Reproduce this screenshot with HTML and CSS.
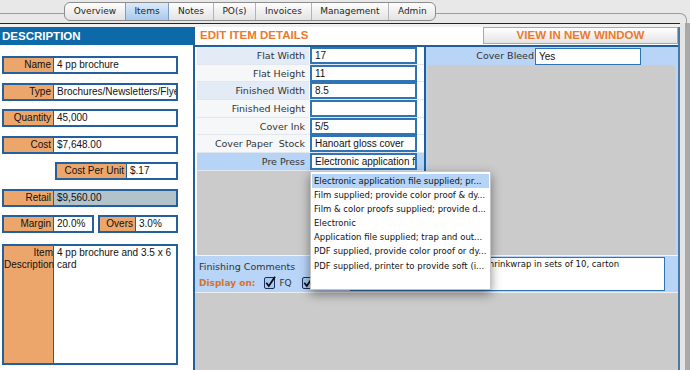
FILE: index.html
```html
<!DOCTYPE html>
<html lang="en">
<head>
  <meta charset="UTF-8">
  <meta name="viewport" content="width=device-width, initial-scale=1.0">
  <title>Items</title>
  <link rel="stylesheet" href="styles.css">
</head>
<body>
  <div class="tab-strip">
    <div class="tabs">
      <div class="tab">Overview</div>
      <div class="tab active">Items</div>
      <div class="tab">Notes</div>
      <div class="tab">PO(s)</div>
      <div class="tab">Invoices</div>
      <div class="tab">Management</div>
      <div class="tab">Admin</div>
    </div>
  </div>

  <div class="content">
    <div class="desc-col">
      <div class="desc-header">DESCRIPTION</div>
      <div class="desc-fields">
        <div class="field"><div class="lbl">Name</div><div class="val">4 pp brochure</div></div>
        <div class="field"><div class="lbl">Type</div><div class="val">Brochures/Newsletters/Flyers</div></div>
        <div class="field"><div class="lbl">Quantity</div><div class="val">45,000</div></div>
        <div class="field"><div class="lbl">Cost</div><div class="val">$7,648.00</div></div>
        <div class="field cpu"><div class="lbl">Cost Per Unit</div><div class="val">$.17</div></div>
        <div class="field"><div class="lbl">Retail</div><div class="val readonly">$9,560.00</div></div>
        <div class="field-pair">
          <div class="field margin"><div class="lbl">Margin</div><div class="val">20.0%</div></div>
          <div class="field overs"><div class="lbl">Overs</div><div class="val">3.0%</div></div>
        </div>
        <div class="field desc"><div class="lbl">Item<br>Description</div><div class="val">4 pp brochure and 3.5 x 6 card</div></div>
      </div>
    </div>

    <div class="edit-col">
      <div class="edit-header">
        <div class="edit-title">EDIT ITEM DETAILS</div>
        <div class="view-btn">VIEW IN NEW WINDOW</div>
      </div>

      <div class="panes">
        <div class="mid-pane">
          <div class="drow alt"><div class="dlbl">Flat Width</div><div class="dinput">17</div></div>
          <div class="drow"><div class="dlbl">Flat Height</div><div class="dinput">11</div></div>
          <div class="drow alt"><div class="dlbl">Finished Width</div><div class="dinput">8.5</div></div>
          <div class="drow"><div class="dlbl">Finished Height</div><div class="dinput"></div></div>
          <div class="drow"><div class="dlbl">Cover Ink</div><div class="dinput">5/5</div></div>
          <div class="drow"><div class="dlbl">Cover Paper&nbsp; Stock</div><div class="dinput">Hanoart gloss cover</div></div>
          <div class="drow selected"><div class="dlbl">Pre Press</div><div class="dinput">Electronic application file supplied</div></div>
          <div class="pane-fill"></div>
        </div>
        <div class="side-pane">
          <div class="srow"><div class="dlbl">Cover Bleed</div><div class="dinput">Yes</div></div>
          <div class="pane-fill"></div>
        </div>
      </div>

      <div class="finishing">
        <div class="fin-label">
          <div class="fin-title">Finishing Comments</div>
          <div class="display-on">
            <span class="disp">Display on:</span>
            <span class="check">
              <svg width="13" height="13" viewBox="0 0 13 13"><rect x="0.5" y="1.5" width="10" height="11" rx="1.5" fill="#a9cbf0" stroke="#1c2d5a"/><path d="M2.3 6.8 L4.8 10 L11 0.8" fill="none" stroke="#0a0a1a" stroke-width="1.8"/></svg>
            </span>FQ
            <span class="check second">
              <svg width="13" height="13" viewBox="0 0 13 13"><rect x="0.5" y="1.5" width="10" height="11" rx="1.5" fill="#a9cbf0" stroke="#1c2d5a"/><path d="M2.3 6.8 L4.8 10 L11 0.8" fill="none" stroke="#0a0a1a" stroke-width="1.8"/></svg>
            </span>PO
          </div>
        </div>
        <div class="fin-text">Fold in half, trim to size, then shrinkwrap in sets of 10, carton</div>
      </div>
      <div class="bottom-fill"></div>
    </div>
  </div>

  <div class="dropdown">
    <div class="opt active">Electronic application file supplied; pr...</div>
    <div class="opt">Film supplied; provide color proof &amp; dy...</div>
    <div class="opt">Film &amp; color proofs supplied; provide d...</div>
    <div class="opt">Electronic</div>
    <div class="opt">Application file supplied; trap and out...</div>
    <div class="opt">PDF supplied, provide color proof or dy...</div>
    <div class="opt">PDF supplied, printer to provide soft (i...</div>
  </div>
</body>
</html>
```

FILE: styles.css
```css
* {
  margin: 0;
  padding: 0;
  box-sizing: border-box;
}
html, body {
  width: 690px;
  height: 370px;
  overflow: hidden;
}
body {
  position: relative;
  background: linear-gradient(to right, #e4e4e4 0, #e4e4e4 685px, #a9a9a9 685px);
  font-family: "DejaVu Sans", sans-serif;
  font-size: 9px;
  color: #222;
}

/* Tab bar */
.tab-strip {
  position: relative;
  height: 23px;
  padding: 2px 0 0 64px;
  background: #e8e8e8;
}
.tab-strip::before {
  content: '';
  position: absolute;
  left: -10px;
  right: 3px;
  top: 13px;
  height: 14px;
  border-top: 1px solid #9d9d9d;
  border-right: 1px solid #9d9d9d;
  border-top-right-radius: 7px;
}
.tabs {
  position: relative;
  display: inline-flex;
  height: 19px;
  border: 1px solid #8c8c8c;
  border-radius: 6px;
  background: linear-gradient(#fdfdfd, #e3e3e3);
  overflow: hidden;
}
.tab {
  padding: 0 8.7px;
  line-height: 17px;
  border-left: 1px solid #b4b4b4;
  color: #1e1e1e;
}
.tab:first-child {
  border-left: none;
}
.tab.active {
  background: linear-gradient(#dceafa, #a8c9ef);
  border-left-color: #7d9cc4;
  border-right: 1px solid #7d9cc4;
}
.tab.active + .tab {
  border-left: none;
}

/* Main frame */
.content {
  display: flex;
  width: 680px;
  height: 347px;
  border-top: 1px solid #262626;
  padding-top: 3px;
  background: #f0f0f0;
}

/* Description column */
.desc-col {
  width: 193px;
  display: flex;
  flex-direction: column;
  background: #fff;
  font-family: "Liberation Sans", Arial, sans-serif;
  font-size: 10px;
  color: #111;
}
.desc-header {
  height: 18px;
  line-height: 18px;
  padding-left: 2px;
  background: #0d69a7;
  color: #fff;
  font-weight: bold;
  font-size: 11.5px;
}
.desc-fields {
  display: flex;
  flex-direction: column;
  gap: 8.5px;
  padding: 11px 0 0 2px;
}
.field {
  display: flex;
  width: 176px;
  height: 18px;
  border: 2px solid #23619e;
}
.lbl {
  width: 50px;
  flex-shrink: 0;
  padding-right: 2px;
  text-align: right;
  line-height: 14px;
  background: #eca66c;
  border-right: 1px solid #23619e;
}
.val {
  flex: 1;
  padding-left: 3px;
  line-height: 14px;
  white-space: nowrap;
  overflow: hidden;
  background: #fff;
}
.val.readonly {
  background: #b3c3cc;
}
.field.cpu {
  width: 123px;
  margin-left: 53px;
}
.field.cpu .lbl {
  width: 70px;
}
.field-pair {
  display: flex;
  gap: 4px;
}
.field.margin {
  width: 92px;
}
.field.overs {
  width: 80px;
}
.field.overs .lbl {
  width: 36px;
}
.field.desc {
  height: 121px;
  margin-top: 2.5px;
}
.field.desc .lbl {
  padding-right: 0;
  line-height: 12px;
  padding-top: 1px;
}
.field.desc .val {
  white-space: normal;
  line-height: 12px;
  padding-top: 1px;
}

/* Edit column */
.edit-col {
  flex: 1;
  display: flex;
  flex-direction: column;
  border-left: 2px solid #1f5f9c;
  border-right: 2px solid #4c78a4;
  background: #cbcbcb;
}
.edit-header {
  display: flex;
  align-items: center;
  justify-content: space-between;
  height: 20px;
  padding-bottom: 2px;
  background: #fff;
  border-bottom: 2px solid #1f5f9c;
  font-family: "Liberation Sans", Arial, sans-serif;
  font-weight: bold;
  font-size: 11.5px;
  color: #ec7a2c;
}
.edit-title {
  padding-left: 5px;
  line-height: 18px;
}
.view-btn {
  width: 195px;
  height: 17px;
  margin-top: 1px;
  line-height: 15px;
  text-align: center;
  border: 1px solid #a9a9a9;
  background: linear-gradient(#ffffff, #e4e4e4);
}

.panes {
  display: flex;
  height: 208px;
}
.mid-pane {
  width: 231px;
  display: flex;
  flex-direction: column;
  padding-left: 2px;
  background: #fff;
  border-right: 2px solid #1f5f9c;
}
.drow {
  display: flex;
  align-items: center;
  height: 17.7px;
  flex-shrink: 0;
  border-bottom: 1px solid #e2e7ef;
}
.dlbl {
  width: 112px;
  height: 100%;
  padding-right: 4px;
  text-align: right;
  line-height: 17px;
  font-size: 9.5px;
  color: #333;
  background: #f6f7f9;
}
.drow.alt .dlbl {
  background: #e3ebf7;
}
.drow.selected {
  background: #b7d3f6;
}
.drow.selected .dlbl {
  background: #b7d3f6;
}
.dinput {
  width: 107px;
  height: 17px;
  margin-left: 1px;
  padding-left: 3px;
  border: 2px solid #2f74b4;
  background: #fff;
  font-family: "Liberation Sans", Arial, sans-serif;
  font-size: 10px;
  line-height: 13px;
  color: #111;
  white-space: nowrap;
  overflow: hidden;
}
.pane-fill {
  flex: 1;
  background: #cbcbcb;
}
.side-pane {
  flex: 1;
  display: flex;
  flex-direction: column;
  padding: 0 3px 0 2px;
  background: #b8d4f7;
}
.srow {
  display: flex;
  align-items: center;
  height: 18px;
  flex-shrink: 0;
}
.srow .dlbl {
  width: 107px;
  padding-right: 1px;
  background: none;
}
.srow .dinput {
  width: 106px;
  margin-left: 0;
  border-width: 1px;
  line-height: 15px;
}

/* Finishing comments */
.finishing {
  display: flex;
  height: 38px;
  padding: 1px 13px 1px 0;
  background: #b8d4f7;
  border-top: 1px solid #f4f4f4;
  border-bottom: 1px solid #eeeeee;
}
.fin-label {
  width: 155px;
  padding: 3px 0 0 4px;
  color: #333;
}
.fin-title {
  font-size: 9.5px;
  line-height: 13px;
}
.display-on {
  display: flex;
  align-items: center;
  margin-top: 3px;
}
.disp {
  font-weight: bold;
  color: #d8702c;
  margin-right: 9px;
}
.check {
  display: inline-flex;
  margin-right: 2px;
}
.check.second {
  margin-left: 10px;
}
.fin-text {
  flex: 1;
  padding: 0 3px 0 6px;
  background: #fff;
  border: 1px solid #2f74b4;
  font-size: 8.5px;
  line-height: 12px;
  color: #111;
  white-space: nowrap;
  overflow: hidden;
}
.bottom-fill {
  flex: 1;
  background: #cbcbcb;
}

/* Open pre press menu */
.dropdown {
  position: absolute;
  left: 310px;
  top: 171px;
  width: 181px;
  height: 119px;
  padding: 2px 1px;
  background: #fff;
  border: 1px solid #c4c4c4;
  box-shadow: 0 4px 10px rgba(0, 0, 0, 0.45);
  font-size: 8.5px;
  color: #111;
}
.opt {
  height: 14.1px;
  line-height: 14px;
  padding-left: 2px;
  white-space: nowrap;
  overflow: hidden;
}
.opt.active {
  background: #b5d4f7;
}
```
